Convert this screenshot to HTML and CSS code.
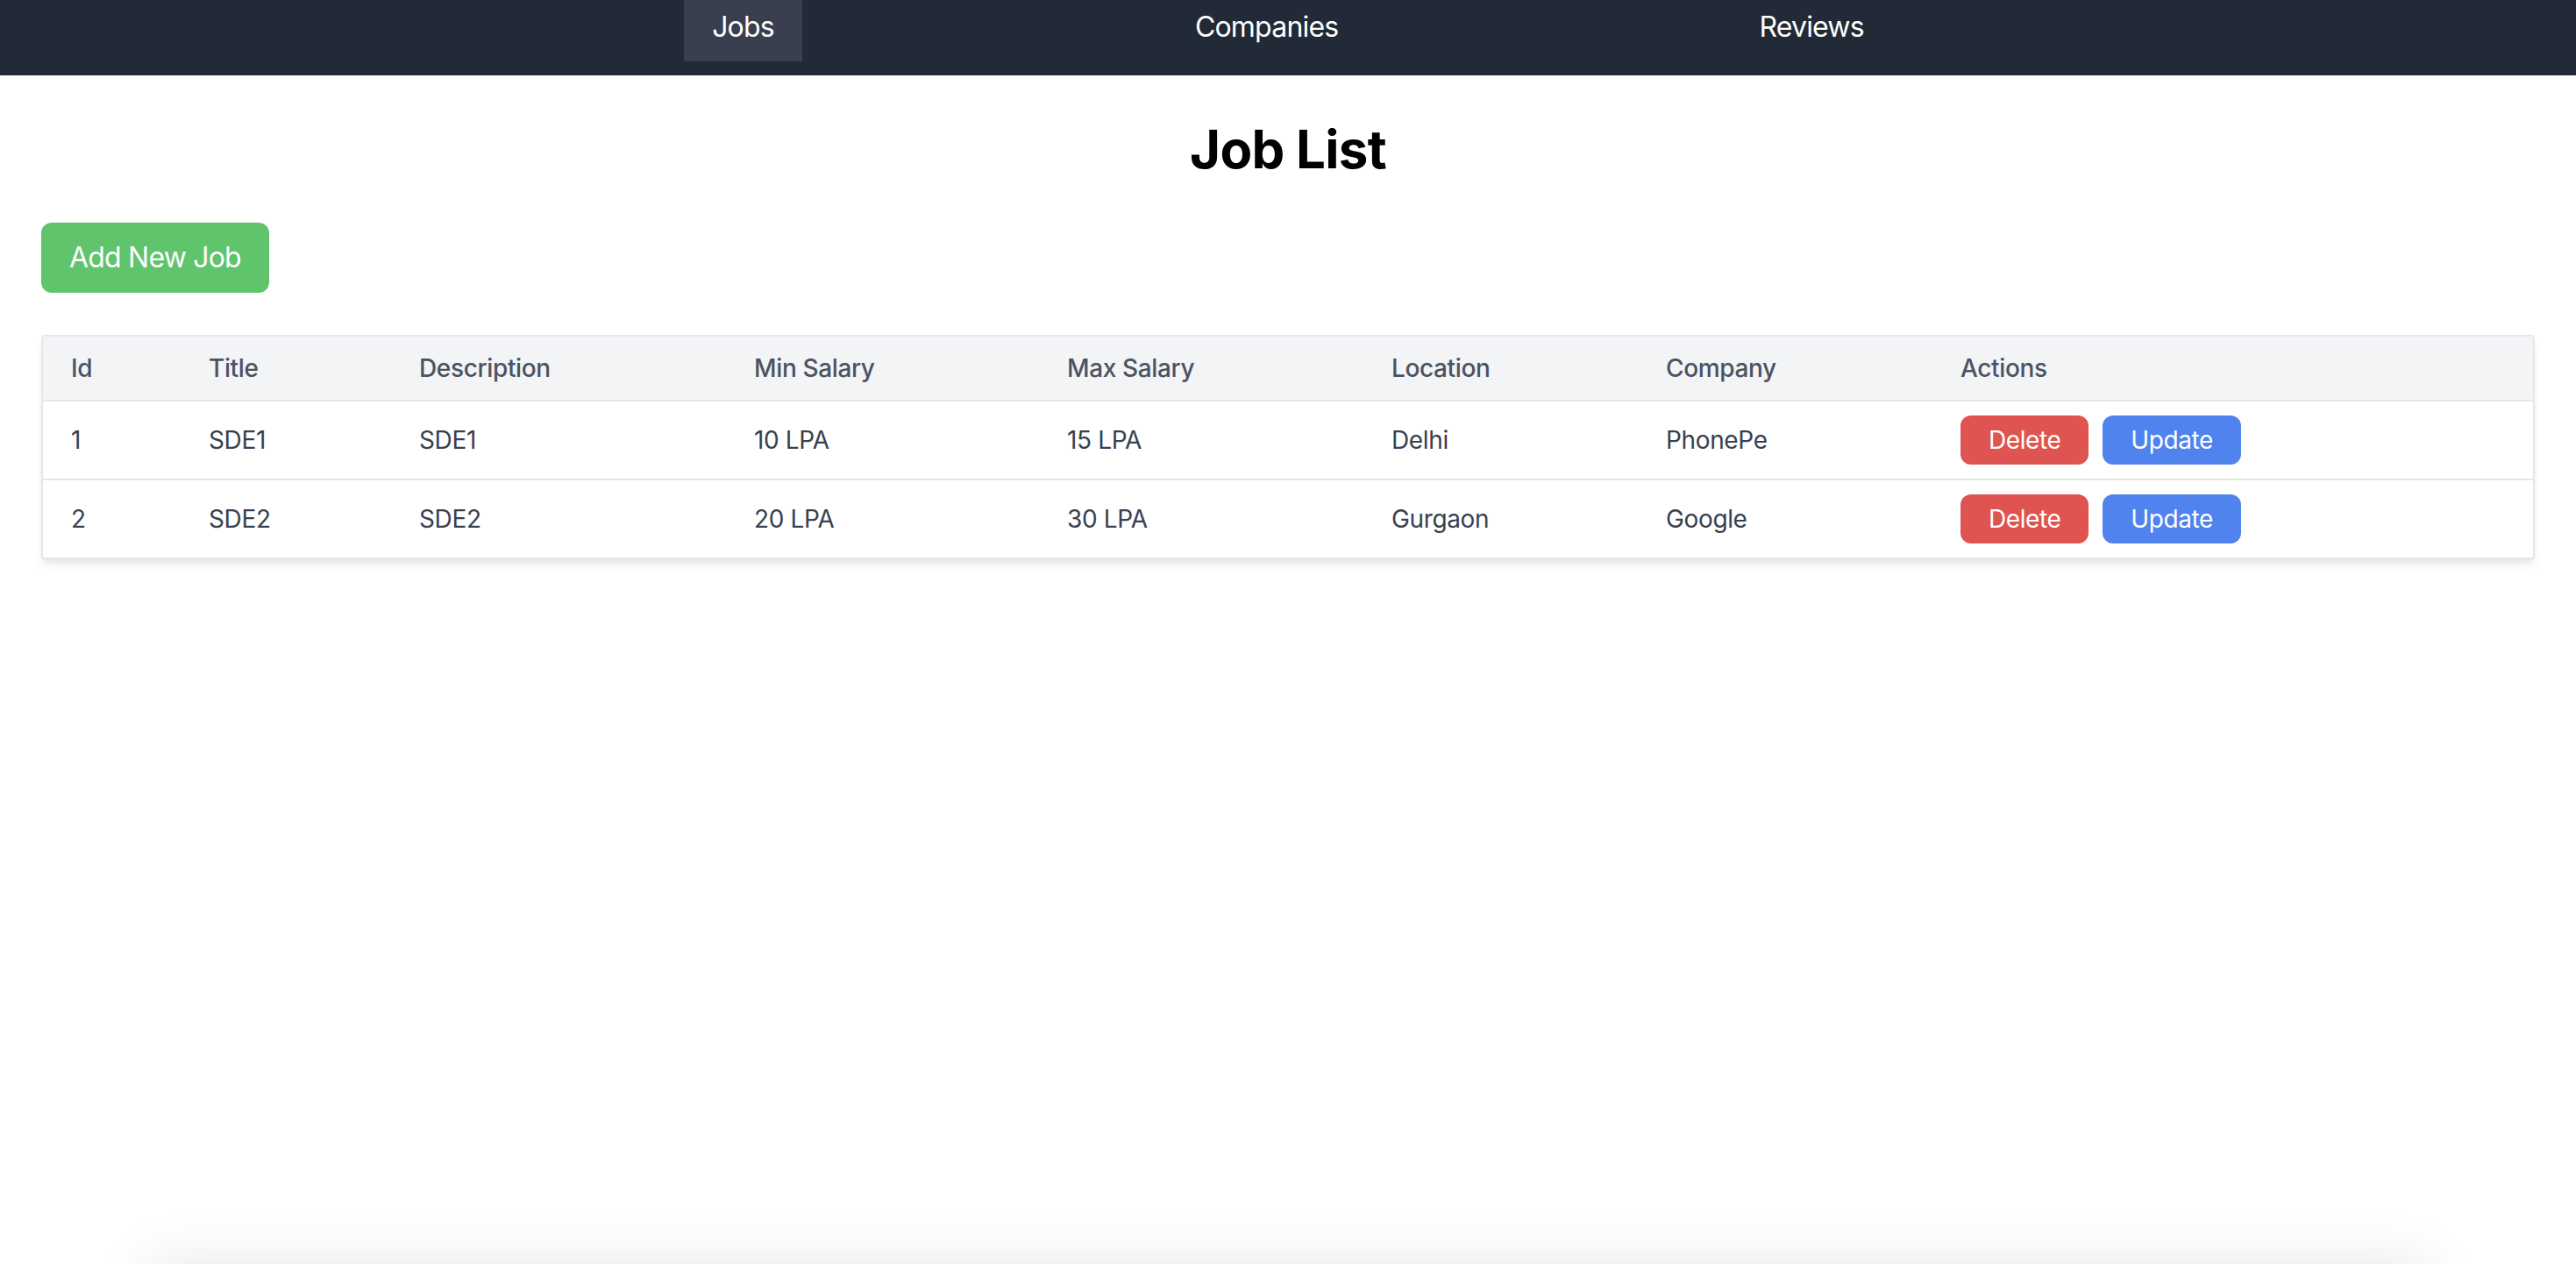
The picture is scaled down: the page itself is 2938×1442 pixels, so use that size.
FILE: index.html
```html
<!DOCTYPE html>
<html lang="en">
<head>
<meta charset="utf-8">
<title>Job List</title>
<link rel="stylesheet" href="styles.css">
</head>
<body>
<div class="page">
  <nav class="navbar">
    <a class="nav-link active" href="#">Jobs</a>
    <a class="nav-link" href="#">Companies</a>
    <a class="nav-link" href="#">Reviews</a>
  </nav>
  <main class="content">
    <h1 class="title">Job List</h1>
    <button class="btn btn-add">Add New Job</button>
    <div class="table-card">
      <table class="jobs">
        <colgroup>
          <col class="c-id"><col class="c-title"><col class="c-desc"><col class="c-min"><col class="c-max"><col class="c-loc"><col class="c-comp"><col class="c-act">
        </colgroup>
        <thead>
          <tr><th>Id</th><th>Title</th><th>Description</th><th>Min Salary</th><th>Max Salary</th><th>Location</th><th>Company</th><th>Actions</th></tr>
        </thead>
        <tbody>
          <tr>
            <td>1</td><td>SDE1</td><td>SDE1</td><td>10 LPA</td><td>15 LPA</td><td>Delhi</td><td>PhonePe</td>
            <td><div class="actions"><button class="btn btn-sm btn-delete">Delete</button><button class="btn btn-sm btn-update">Update</button></div></td>
          </tr>
          <tr>
            <td>2</td><td>SDE2</td><td>SDE2</td><td>20 LPA</td><td>30 LPA</td><td>Gurgaon</td><td>Google</td>
            <td><div class="actions"><button class="btn btn-sm btn-delete">Delete</button><button class="btn btn-sm btn-update">Update</button></div></td>
          </tr>
        </tbody>
      </table>
    </div>
  </main>
</div>
<footer class="footer"></footer>
</body>
</html>
```
FILE: styles.css
```css
* { box-sizing: border-box; }
html, body { margin: 0; padding: 0; }
body {
  font-family: Inter, "Noto Sans", "Liberation Sans", sans-serif;
  background: #ffffff;
  color: #111827;
}
.page {
  min-height: 100vh;
  display: flex;
  flex-direction: column;
}
.navbar {
  height: 86px;
  background: #222937;
  display: flex;
  justify-content: center;
  align-items: flex-start;
  gap: 416px;
}
.nav-link {
  display: block;
  color: #ffffff;
  text-decoration: none;
  font-size: 32px;
  line-height: 48px;
  letter-spacing: -0.025em;
  padding: 7px 32px 15px;
}
.nav-link.active { background: #393f4e; }
.content {
  flex: 1;
  padding: 48px 47px;
}
.title {
  margin: 0 0 48px;
  text-align: center;
  font-size: 60px;
  line-height: 72px;
  font-weight: 700;
  letter-spacing: -0.012em;
  color: #000000;
}
.btn {
  font-family: inherit;
  border: 0;
  color: #ffffff;
  cursor: pointer;
}
.btn-add {
  display: block;
  font-size: 32px;
  line-height: 48px;
  letter-spacing: -0.025em;
  padding: 16px 32px;
  border-radius: 12px;
  background: #60c46c;
  margin-bottom: 48px;
}
.table-card {
  border: 2px solid #e5e7eb;
  border-radius: 4px;
  background: #ffffff;
  box-shadow: 0 8px 12px -2px rgba(0,0,0,0.08), 0 4px 8px -4px rgba(0,0,0,0.08);
  overflow: hidden;
}
.jobs {
  width: 100%;
  border-collapse: collapse;
  table-layout: fixed;
}
.c-id { width: 157px; }
.c-title { width: 240px; }
.c-desc { width: 382px; }
.c-min { width: 357px; }
.c-max { width: 370px; }
.c-loc { width: 313px; }
.c-comp { width: 336px; }
.jobs th, .jobs td {
  text-align: left;
  font-size: 28px;
  line-height: 40px;
  letter-spacing: -0.013em;
  padding: 16px 32px;
  white-space: nowrap;
}
.jobs th {
  background: #f3f4f6;
  color: #4b5362;
  font-weight: 500;
  border-bottom: 2px solid #e5e7eb;
}
.jobs td {
  color: #374151;
  font-weight: 400;
  border-bottom: 2px solid #e5e7eb;
}
.jobs tbody tr:last-child td { border-bottom: 0; }
.actions { display: flex; gap: 16px; }
.btn-sm {
  font-size: 28px;
  line-height: 40px;
  letter-spacing: -0.015em;
  padding: 8px 32px;
  border-radius: 12px;
}
.btn-delete { background: #df5450; }
.btn-update { background: #5083ed; }
.footer {
  height: 200px;
  margin: 0 170px;
  background: #ffffff;
  box-shadow: 0 0 64px rgba(0,0,0,0.1);
}
```
